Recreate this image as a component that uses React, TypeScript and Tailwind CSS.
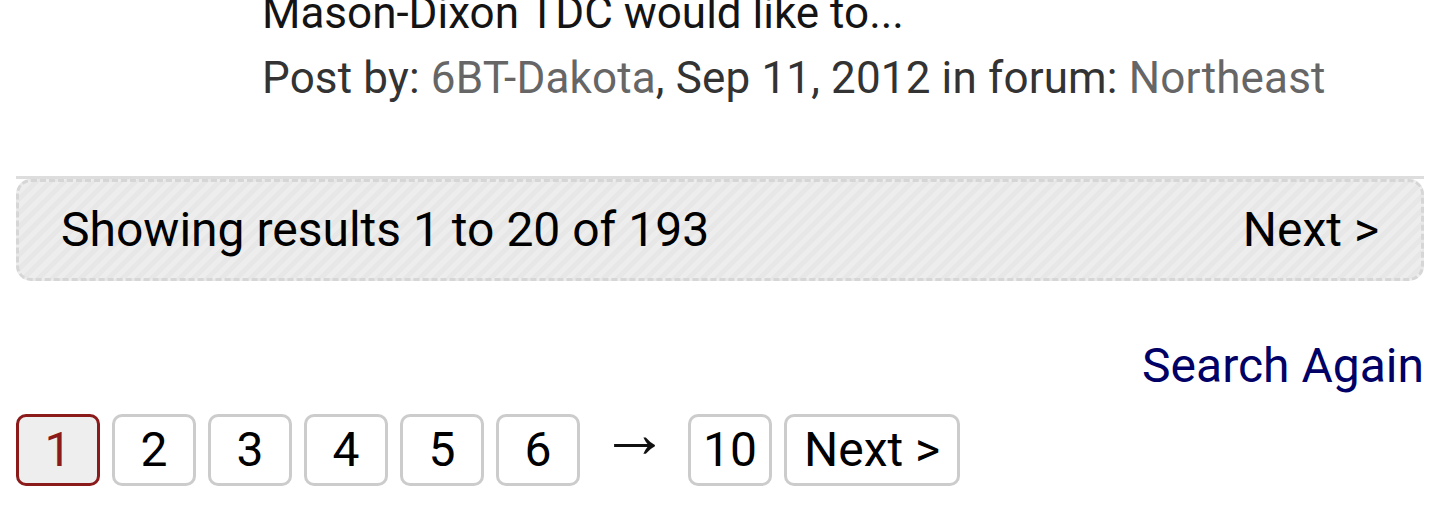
const pages = ["1", "2", "3", "4", "5", "6"];

export default function App() {
  return (
    <div className="h-[531px] w-[1440px] overflow-hidden bg-white font-['Roboto',sans-serif]">
      <div className="-mt-[19px] pl-[262px] text-[44px] leading-[65px]">
        <div className="text-[#141414]">Mason-Dixon TDC would like to...</div>
        <div className="tracking-[0.15px] text-[#333333]">
          Post by: <span className="text-[#666666]">6BT-Dakota</span>, Sep 11, 2012 in forum:{" "}
          <span className="text-[#666666]">Northeast</span>
        </div>
      </div>

      <div className="mx-4 mt-[65px] border-t-[3px] border-[#dddddd]">
        <div className="flex h-[102px] items-center justify-between rounded-[15px] border-[3px] border-dashed border-[#d6d6d6] bg-[repeating-linear-gradient(-45deg,#ededed_0,#ededed_5px,#e7e7e7_5px,#e7e7e7_10px)] px-[42px] text-[48px] text-black">
          <span>Showing results 1 to 20 of 193</span>
          <span>Next &gt;</span>
        </div>
      </div>

      <div className="mx-4 mt-[55px] flex justify-end text-[48px] leading-[60px] text-[#000066]">
        Search Again
      </div>

      <div className="mx-4 mt-[18px] flex items-center gap-[12px] text-[48px]">
        {pages.map((p) => (
          <div
            key={p}
            className={
              p === "1"
                ? "flex h-[72px] w-[84px] items-center justify-center rounded-[10px] border-[3px] border-[#8b1a1a] bg-[#eeeeee] text-[#8b1a1a]"
                : "flex h-[72px] w-[84px] items-center justify-center rounded-[10px] border-[3px] border-[#cccccc] bg-white text-black"
            }
          >
            {p}
          </div>
        ))}
        <span className="ml-[8px] mr-[7px] -mt-[34px] font-['Liberation_Sans',sans-serif] text-[69px] leading-none text-[#111111]">→</span>
        <div className="flex h-[72px] w-[84px] items-center justify-center rounded-[10px] border-[3px] border-[#cccccc] bg-white text-black">
          10
        </div>
        <div className="flex h-[72px] items-center justify-center rounded-[10px] border-[3px] border-[#cccccc] bg-white px-[17px] text-black">
          Next &gt;
        </div>
      </div>
    </div>
  );
}
